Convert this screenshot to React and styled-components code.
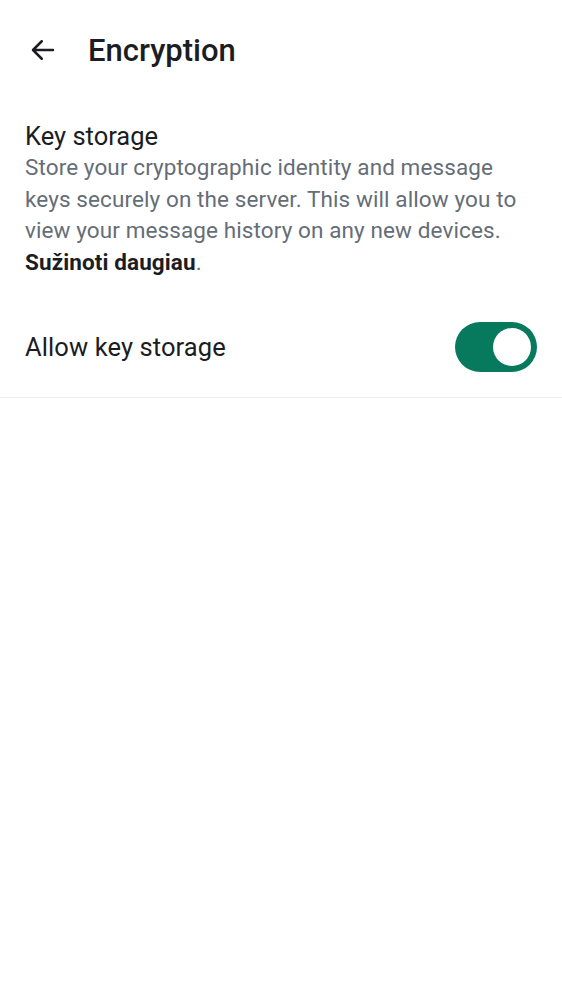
import React, { useState } from 'react'
import styled, { createGlobalStyle } from 'styled-components'

const GlobalStyle = createGlobalStyle`
  html, body {
    margin: 0;
    padding: 0;
    background: #ffffff;
  }
  body {
    font-family: Roboto, "Noto Sans", sans-serif;
    -webkit-font-smoothing: antialiased;
  }
`

export default function App() {
  const [enabled, setEnabled] = useState(true)

  return (
    <Page>
      <GlobalStyle />
      <TopBar>
        <BackButton aria-label="Back">
          <svg width="30" height="30" viewBox="0 0 24 24" fill="none">
            <path
              d="M20 12H4.5M11 5l-7 7 7 7"
              stroke="#1b1d22"
              strokeWidth="2"
              strokeLinecap="round"
              strokeLinejoin="round"
            />
          </svg>
        </BackButton>
        <Title>Encryption</Title>
      </TopBar>

      <Section>
        <SectionTitle>Key storage</SectionTitle>
        <Description>
          Store your cryptographic identity and message keys securely on the
          server. This will allow you to view your message history on any new
          devices. <LearnMore>Sužinoti daugiau</LearnMore>.
        </Description>
      </Section>

      <ToggleRow>
        <RowLabel>Allow key storage</RowLabel>
        <Switch
          role="switch"
          aria-checked={enabled}
          on={enabled ? 1 : 0}
          onClick={() => setEnabled(!enabled)}
        >
          <Knob on={enabled ? 1 : 0} />
        </Switch>
      </ToggleRow>
      <Divider />
    </Page>
  )
}

const Page = styled.div`
  width: 100%;
  min-height: 1000px;
  background: #ffffff;
  color: #1b1d22;
`

const TopBar = styled.header`
  display: flex;
  align-items: center;
  height: 100px;
  padding: 0 20px 0 28px;
  box-sizing: border-box;
`

const BackButton = styled.button`
  display: flex;
  align-items: center;
  justify-content: center;
  width: 30px;
  height: 30px;
  padding: 0;
  margin-right: 30px;
  border: none;
  background: none;
  cursor: pointer;
`

const Title = styled.h1`
  margin: 0;
  font-size: 31px;
  font-weight: 500;
  color: #1b1d22;
`

const Section = styled.section`
  padding: 20px 30px 0 25px;
`

const SectionTitle = styled.h2`
  margin: 0;
  font-size: 25.5px;
  line-height: 32px;
  font-weight: 400;
  color: #1b1d22;
`

const Description = styled.p`
  margin: 0;
  font-size: 22.5px;
  line-height: 31.5px;
  letter-spacing: 0.1px;
  color: #656d77;
`

const LearnMore = styled.a`
  font-weight: 700;
  color: #1b1d22;
  text-decoration: none;
`

const ToggleRow = styled.div`
  display: flex;
  align-items: center;
  justify-content: space-between;
  margin-top: 19px;
  padding: 0 25px;
  height: 100px;
`

const RowLabel = styled.span`
  font-size: 25.5px;
  letter-spacing: 0.1px;
  color: #1b1d22;
`

const Switch = styled.button`
  position: relative;
  width: 82px;
  height: 50px;
  padding: 0;
  border: none;
  border-radius: 25px;
  background: ${p => (p.on ? '#077a5e' : '#d0d3d8')};
  cursor: pointer;
`

const Knob = styled.span`
  position: absolute;
  top: 6px;
  left: ${p => (p.on ? '38px' : '6px')};
  width: 38px;
  height: 38px;
  border-radius: 50%;
  background: #ffffff;
`

const Divider = styled.hr`
  margin: 0;
  border: none;
  border-top: 1px solid #ebedef;
`
